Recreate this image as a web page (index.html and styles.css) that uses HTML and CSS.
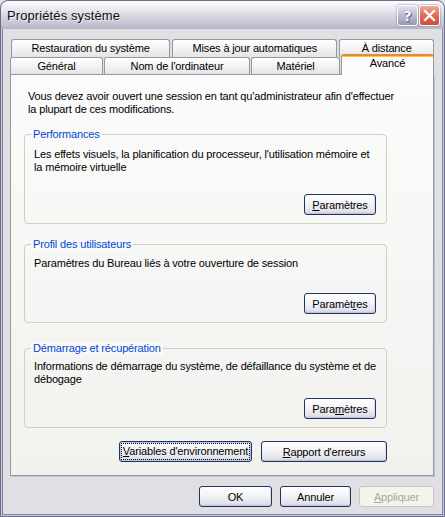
FILE: index.html
```
<!DOCTYPE html>
<html lang="fr">
<head>
<meta charset="utf-8">
<title>Propriétés système</title>
<link rel="stylesheet" href="styles.css">
</head>
<body>
<div class="window">
  <div class="titlebar">
    <span class="title">Propriétés système</span>
    <div class="caption-buttons">
      <span class="cap help">?</span>
      <span class="cap close"><svg width="13" height="13" viewBox="0 0 13 13"><path d="M2 2 L11 11 M11 2 L2 11" stroke="#fff" stroke-width="2.2" stroke-linecap="square"/></svg></span>
    </div>
  </div>
  <div class="client">
    <div class="tabs">
      <div class="tab-row back">
        <div class="tab t-restore">Restauration du système</div>
        <div class="tab t-updates">Mises à jour automatiques</div>
        <div class="tab t-remote">À distance</div>
      </div>
      <div class="tab-row front">
        <div class="tab t-general">Général</div>
        <div class="tab t-name">Nom de l'ordinateur</div>
        <div class="tab t-hw">Matériel</div>
        <div class="tab t-adv selected">Avancé</div>
      </div>
    </div>
    <div class="panel">
      <p class="intro">Vous devez avoir ouvert une session en tant qu'administrateur afin d'effectuer<br>la plupart de ces modifications.</p>
      <div class="group g-perf">
        <span class="group-title">Performances</span>
        <p class="group-text">Les effets visuels, la planification du processeur, l'utilisation mémoire et<br>la mémoire virtuelle</p>
        <div class="group-actions"><span class="btn btn-set"><u>P</u>aramètres</span></div>
      </div>
      <div class="group g-prof">
        <span class="group-title">Profil des utilisateurs</span>
        <p class="group-text">Paramètres du Bureau liés à votre ouverture de session</p>
        <div class="group-actions"><span class="btn btn-set">Paramèt<u>r</u>es</span></div>
      </div>
      <div class="group g-boot">
        <span class="group-title">Démarrage et récupération</span>
        <p class="group-text">Informations de démarrage du système, de défaillance du système et de<br>débogage</p>
        <div class="group-actions"><span class="btn btn-set">Para<u>m</u>ètres</span></div>
      </div>
      <div class="panel-buttons">
        <span class="btn btn-env focused"><span class="focus-rect"><u>V</u>ariables d'environnement</span></span>
        <span class="btn btn-err"><u>R</u>apport d'erreurs</span>
      </div>
    </div>
    <div class="dialog-buttons">
      <span class="btn btn-ok">OK</span>
      <span class="btn btn-cancel">Annuler</span>
      <span class="btn btn-apply disabled"><u>A</u>ppliquer</span>
    </div>
  </div>
</div>
</body>
</html>
```
FILE: styles.css
```
html, body {
  margin: 0;
  padding: 0;
  background: #e0dfe3;
}

.window {
  width: 445px;
  height: 517px;
  box-sizing: border-box;
  border: 1px solid #6c6c8c;
  border-radius: 8px 8px 0 0;
  background: #c6c6d6;
  display: flex;
  flex-direction: column;
  overflow: hidden;
  font-family: "Liberation Sans", Arial, sans-serif;
  font-size: 11px;
  letter-spacing: -0.15px;
  color: #000;
}

.titlebar {
  height: 28px;
  flex: none;
  display: flex;
  align-items: center;
  justify-content: space-between;
  padding: 0 4px 0 6px;
  border-radius: 7px 7px 0 0;
  background: linear-gradient(#fdfdfe 0%, #ececf2 25%, #d6d6e0 55%, #c2c2d2 85%, #b4b4c6 100%);
}

.title {
  font-size: 13px;
  letter-spacing: 0.1px;
  color: #111;
  text-shadow: 1px 1px 0 rgba(255,255,255,0.6);
}

.caption-buttons {
  display: flex;
  gap: 1px;
  margin-top: 1px;
}

.cap {
  width: 21px;
  height: 21px;
  box-sizing: border-box;
  border: 1px solid #fff;
  border-radius: 3px;
  display: flex;
  align-items: center;
  justify-content: center;
  box-shadow: 0 0 0 1px rgba(120,120,150,0.35);
}

.help {
  background: linear-gradient(#e2e2ee, #b4b4ca 60%, #9898b4);
  color: #fff;
  font-weight: bold;
  font-size: 14px;
  font-family: "DejaVu Sans", sans-serif;
  text-shadow: 0 0 1px #505070, 1px 1px 0 #606080;
}

.close {
  background: linear-gradient(#f2aa9a, #e06c56 50%, #cc4e3a);
}

.client {
  flex: 1;
  margin: 0 1px 1px;
  border: 1px solid #8585a5;
  border-top: none;
  background: #e0dfe3;
  padding: 10px 8px 7px 7px;
  display: flex;
  flex-direction: column;
}

/* Tabs */
.tabs {
  display: flex;
  flex-direction: column;
}

.tab-row {
  display: flex;
  align-items: flex-end;
}

.tab-row.back {
  height: 18px;
  margin-left: 1px;
  gap: 2px;
}

.tab-row.front {
  height: 17px;
  gap: 1px;
}

.tab {
  box-sizing: border-box;
  height: 100%;
  border: 1px solid #919b9c;
  border-bottom: none;
  border-radius: 3px 3px 0 0;
  background: linear-gradient(#ffffff, #f3f3f3 50%, #e4e4e8);
  text-align: center;
  line-height: 16px;
  white-space: nowrap;
}

.back .tab { line-height: 16px; }

.t-restore { width: 160px; }
.t-updates { width: 166px; }
.t-remote { width: 95px; }
.t-general { width: 93px; }
.t-name { width: 146px; }
.t-hw { width: 89px; }
.t-adv { width: 93px; }

.tab.selected {
  position: relative;
  z-index: 2;
  height: 21px;
  margin-bottom: -1px;
  border-top: 2px solid #e68b2c;
  box-shadow: inset 0 1px 0 #ffc73c;
  background: #fcfcfe;
  line-height: 15px;
}

/* Panel */
.panel {
  position: relative;
  z-index: 1;
  height: 402px;
  box-sizing: border-box;
  border: 1px solid #919b9c;
  background: linear-gradient(#fbfbfb, #f5f5f3 60%, #f1f1ee);
  box-shadow: 1px 1px 0 #c4c4cc;
  padding: 15px 0 0 13px;
  display: flex;
  flex-direction: column;
}

.intro {
  margin: 0 0 0 4px;
  line-height: 13px;
  white-space: nowrap;
}

.group {
  position: relative;
  width: 363px;
  box-sizing: border-box;
  border: 1px solid #d0d0bf;
  border-radius: 4px;
  display: flex;
  flex-direction: column;
  padding-left: 9px;
  padding-right: 10px;
}

.g-perf { height: 90px; margin-top: 18px; padding-top: 13px; padding-bottom: 8px; }
.g-prof { height: 79px; margin-top: 20px; padding-top: 12px; padding-bottom: 8px; }
.g-boot { height: 80px; margin-top: 25px; padding-top: 11px; padding-bottom: 8px; }

.group-title {
  position: absolute;
  top: -7px;
  left: 6px;
  padding: 0 2px;
  line-height: 13px;
  color: #0046d5;
  background: #f9f9f8;
  white-space: nowrap;
}

.group-text {
  margin: 0;
  line-height: 13px;
  white-space: nowrap;
}

.group-actions {
  margin-top: auto;
  display: flex;
  justify-content: flex-end;
}

/* Buttons */
.btn {
  box-sizing: border-box;
  height: 21px;
  display: inline-flex;
  align-items: center;
  justify-content: center;
  border: 1px solid #1c3564;
  border-radius: 3px;
  background: linear-gradient(#ffffff, #f4f4f7 45%, #e2e2ea 85%, #cfcfdc);
  box-shadow: inset 0 -1px 0 #c4c4d6, inset -1px 0 0 #dcdce6;
  white-space: nowrap;
  color: #000;
}

.btn-set { width: 72px; }

.panel-buttons {
  width: 363px;
  margin-top: 13px;
  display: flex;
  justify-content: flex-end;
  gap: 9px;
}

.btn-env { width: 133px; }
.btn-err { width: 126px; }

.btn.focused {
  box-shadow: inset 0 0 0 1px #b8c8ec, inset 0 -1px 0 #c4c4d6;
}

.focus-rect {
  outline: 1px dotted #000;
  outline-offset: 0;
  line-height: 15px;
  display: inline-block;
  width: 127px;
  box-sizing: border-box;
  text-align: center;
}

.dialog-buttons {
  margin-top: 10px;
  display: flex;
  justify-content: flex-end;
  gap: 8px;
}

.btn-ok { width: 73px; }
.btn-cancel { width: 71px; }
.btn-apply { width: 75px; }

.btn.disabled {
  border-color: #c9c7ba;
  background: #f5f4ea;
  box-shadow: none;
  color: #aca899;
}
```
